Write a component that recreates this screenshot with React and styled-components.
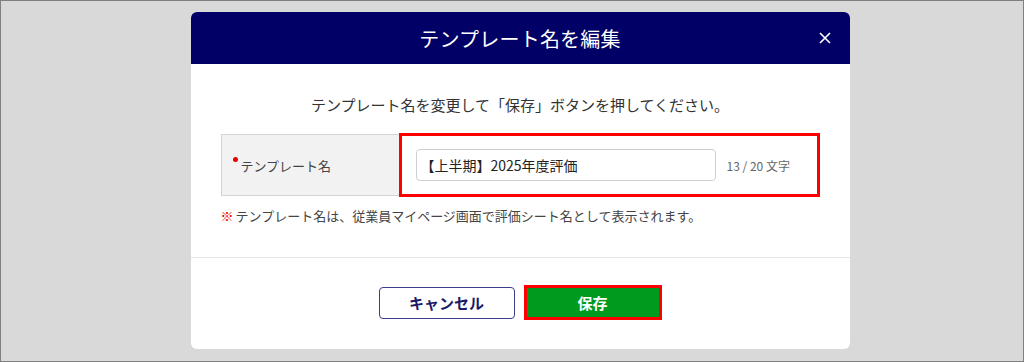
import React from 'react';
import styled, { createGlobalStyle } from 'styled-components';

const GlobalStyle = createGlobalStyle`
  html, body {
    margin: 0;
    padding: 0;
  }
  body {
    font-family: "Noto Sans CJK JP", "Noto Sans", sans-serif;
    color: #333;
  }
`;

const Backdrop = styled.div`
  box-sizing: border-box;
  width: 1024px;
  height: 362px;
  border: 1px solid #808080;
  background-color: #d9d9d9;
  padding-top: 11px;
  display: flex;
  justify-content: center;
  align-items: flex-start;
`;

const Modal = styled.div`
  width: 659px;
  background-color: #fff;
  border-radius: 6px;
  overflow: hidden;
  margin-left: 16px;
`;

const Header = styled.div`
  height: 52px;
  background-color: #000066;
  color: #fff;
  display: grid;
  grid-template-columns: 1fr auto 1fr;
  align-items: center;
  padding: 0 17px;
`;

const Title = styled.h2`
  grid-column: 2;
  margin: 0;
  font-size: 20px;
  font-weight: 400;
  letter-spacing: 0.2px;
`;

const CloseButton = styled.button`
  grid-column: 3;
  justify-self: end;
  background: none;
  border: none;
  padding: 0;
  width: 16px;
  height: 16px;
  display: flex;
  align-items: center;
  justify-content: center;
  cursor: pointer;
`;

const Body = styled.div`
  padding: 30px 30px 32px;
`;

const Lead = styled.p`
  margin: 0;
  text-align: center;
  font-size: 15px;
  line-height: 22px;
  color: #333;
`;

const FieldRow = styled.div`
  margin-top: 17px;
  display: flex;
  height: 64px;
`;

const LabelCell = styled.div`
  box-sizing: border-box;
  width: 178px;
  margin: 1px 0;
  background-color: #f2f2f2;
  border: 1px solid #d4d4d4;
  border-right: none;
  display: flex;
  align-items: center;
  padding-left: 11px;
  font-size: 13px;
  color: #444;
`;

const RequiredDot = styled.span`
  width: 5px;
  height: 5px;
  border-radius: 50%;
  background-color: #e60000;
  margin-right: 3px;
  align-self: center;
  transform: translateY(-6px);
`;

const ValueCell = styled.div`
  box-sizing: border-box;
  flex: 1;
  border: 3px solid #ff0000;
  display: flex;
  align-items: center;
  padding-left: 14px;
  gap: 11px;
`;

const TextInput = styled.input`
  box-sizing: border-box;
  width: 300px;
  height: 32px;
  border: 1px solid #cfcfcf;
  border-radius: 4px;
  padding: 0 4px;
  font-family: "Noto Sans CJK JP", "Noto Sans", sans-serif;
  font-size: 14px;
  color: #222;
  outline: none;
`;

const Counter = styled.span`
  font-size: 12px;
  color: #666;
  font-family: "Noto Sans CJK JP", "Liberation Sans", sans-serif;
`;

const Note = styled.p`
  margin: 10px 0 0;
  font-size: 13px;
  line-height: 18px;
  color: #444;
`;

const Mark = styled.span`
  color: #e60000;
  margin-right: 2px;
`;

const Footer = styled.div`
  border-top: 1px solid #e6e6e6;
  padding: 27px 0 29px;
  display: flex;
  justify-content: center;
  align-items: center;
  gap: 9px;
`;

const Button = styled.button`
  box-sizing: border-box;
  font-family: "Noto Sans CJK JP", "Noto Sans", sans-serif;
  font-size: 15px;
  font-weight: 700;
  border-radius: ${(p) => (p.$primary ? '0' : '4px')};
  width: ${(p) => (p.$primary ? '138px' : '136px')};
  height: ${(p) => (p.$primary ? '35px' : '32px')};
  border: ${(p) => (p.$primary ? '3px solid #ff0000' : '1px solid #3c3c8c')};
  background-color: ${(p) => (p.$primary ? '#009a1f' : '#fff')};
  color: ${(p) => (p.$primary ? '#fff' : '#1a1a66')};
  cursor: pointer;
`;

const App = () => {
  return (
    <>
      <GlobalStyle />
      <Backdrop>
        <Modal>
          {/* Header */}
          <Header>
            <Title>テンプレート名を編集</Title>
            <CloseButton type="button" aria-label="閉じる">
              <svg width="12" height="12" viewBox="0 0 12 12">
                <path d="M1 1L11 11M11 1L1 11" stroke="#fff" strokeWidth="1.6" />
              </svg>
            </CloseButton>
          </Header>

          {/* Form */}
          <Body>
            <Lead>テンプレート名を変更して「保存」ボタンを押してください。</Lead>
            <FieldRow>
              <LabelCell>
                <RequiredDot />
                テンプレート名
              </LabelCell>
              <ValueCell>
                <TextInput type="text" defaultValue="【上半期】2025年度評価" />
                <Counter>13 / 20 文字</Counter>
              </ValueCell>
            </FieldRow>
            <Note>
              <Mark>※</Mark>テンプレート名は、従業員マイページ画面で評価シート名として表示されます。
            </Note>
          </Body>

          {/* Actions */}
          <Footer>
            <Button type="button">キャンセル</Button>
            <Button type="button" $primary>保存</Button>
          </Footer>
        </Modal>
      </Backdrop>
    </>
  );
};

export default App;
